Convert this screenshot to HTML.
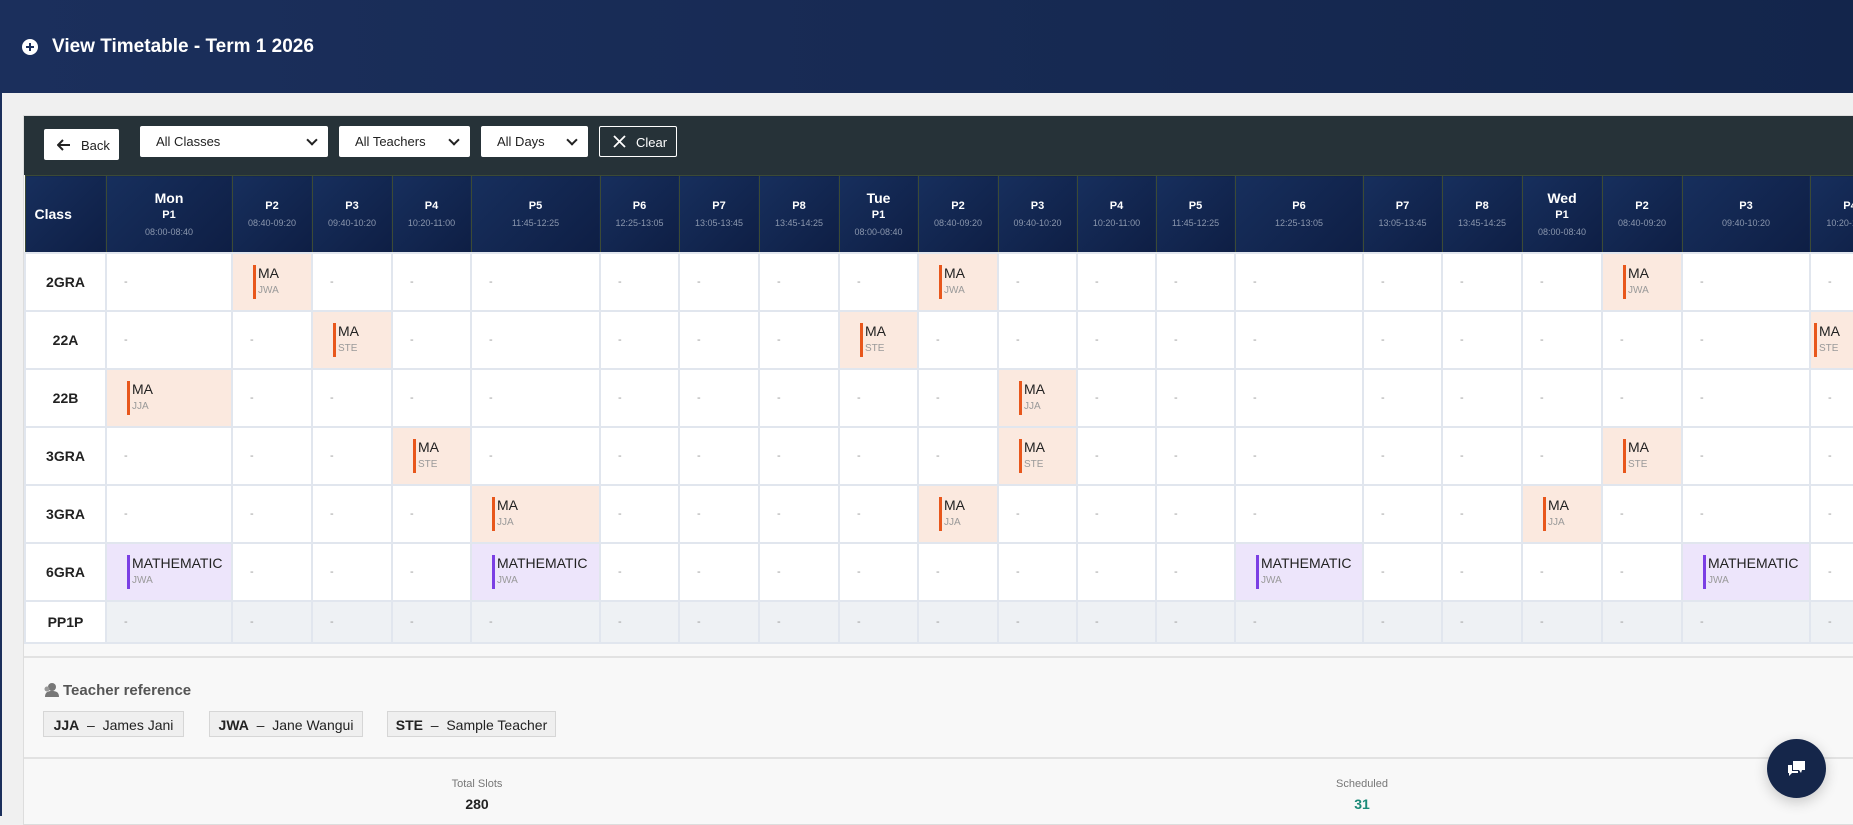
<!DOCTYPE html>
<html><head><meta charset="utf-8">
<style>
*{box-sizing:border-box;margin:0;padding:0}
body{width:1853px;height:816px;overflow:hidden;background:#f0f0f0;font-family:"Liberation Sans",Arial,sans-serif;position:relative}
.top{position:absolute;left:0;top:0;width:1853px;height:93px;background:linear-gradient(90deg,#1b2f5c,#13254b)}
.top h1{position:absolute;left:52px;top:36px;font-size:19px;color:#fff;font-weight:bold}
.top .ic{position:absolute;left:22px;top:39px;width:16px;height:16px;border-radius:50%;background:#fff}
.top .ic:before,.top .ic:after{content:"";position:absolute;background:#1b2f5c}
.top .ic:before{left:4px;top:7px;width:8px;height:2px}
.top .ic:after{left:7px;top:4px;width:2px;height:8px}
.lstrip{position:absolute;left:0;top:93px;width:2px;height:723px;background:#1b2f5c}
.card{position:absolute;left:23px;top:115px;width:1840px;height:710px;background:#f8f8f8;border:1px solid #ddd;overflow:hidden}
.tb{position:absolute;left:0;top:0;width:100%;height:59px;background:#263238}
.btn{position:absolute;background:#fff;border-radius:2px;font-size:13px;color:#222}
.sel{position:absolute;top:10px;height:31px;background:#fff;border-radius:2px;font-size:13px;color:#222;padding:8px 0 0 16px}
.sel:after{content:"";position:absolute;right:12px;top:10px;width:6px;height:6px;border-right:2px solid #222;border-bottom:2px solid #222;transform:rotate(45deg)}
.clr{position:absolute;left:575px;top:10px;width:78px;height:31px;border:1px solid #fff;border-radius:2px;color:#fff;font-size:13px;padding:8px 0 0 36px}
.grid{position:absolute;left:0;top:59px;border-collapse:collapse;table-layout:fixed;width:1865px}
.grid th{background:linear-gradient(135deg,#172f5d,#0e1e44);color:#fff;border:1px solid #3c4a35;height:77px;font-size:11px;text-align:center;font-weight:bold;vertical-align:middle}
.grid th .d{font-size:14px;display:block;margin-bottom:3px}
.grid th .t{display:block;font-size:9px;color:#8a96ad;font-weight:normal;margin-top:6px}
.grid th.cl{text-align:left;padding-left:9px;font-size:14px}
.grid td{height:58px;border:2px solid #e1e6ee;background:#fff;font-size:11px;color:#999;padding-left:17px;vertical-align:middle}
.grid td.cn{background:#fff;color:#222;font-weight:bold;font-size:14px;text-align:center;padding-left:0}
.grid tr.pp td{height:42px;background:#eef1f4}
.grid tr.pp td.cn{background:#fff}
.grid td.o{background:#fbe9df;padding-left:20px}
.grid td.p{background:#ede5fb;padding-left:20px}
.e{border-left:3px solid #e8571c;padding-left:2px;line-height:17px}
.p .e{border-left-color:#7b3fe4}
.e b{display:block;font-weight:normal;color:#222;font-size:14px}
.e i{display:block;font-style:normal;color:#999;font-size:10px}
.ln{position:absolute;left:0;width:100%;height:2px;background:#e2e2e2}
.tr{position:absolute;left:19px;top:566px;font-size:15px;color:#555;font-weight:bold}
.chip{position:absolute;top:595px;height:26px;background:#efefef;border:1px solid #d6d6d6;font-size:14px;color:#222;padding:5px 0 0;white-space:nowrap;text-align:center}
.stl{position:absolute;font-size:11px;color:#777;text-align:center;width:200px}
.stv{position:absolute;font-size:14px;font-weight:bold;text-align:center;width:200px}
.fab{position:absolute;left:1767px;top:739px;width:59px;height:59px;border-radius:50%;background:#15264a;box-shadow:0 4px 14px rgba(0,0,0,.2)}
</style></head><body>
<div class="top"><div class="ic"></div><h1>View Timetable - Term 1 2026</h1></div>
<div class="lstrip"></div>
<div class="card">
<div class="tb">
<div class="btn" style="left:20px;top:13px;width:75px;height:31px;padding:9px 0 0 37px">Back
<svg style="position:absolute;left:13px;top:10px" width="14" height="12" viewBox="0 0 14 12"><path d="M13 6H2M6 1L1 6l5 5" stroke="#222" stroke-width="2" fill="none"/></svg></div>
<div class="sel" style="left:116px;width:188px">All Classes</div>
<div class="sel" style="left:315px;width:131px">All Teachers</div>
<div class="sel" style="left:457px;width:107px">All Days</div>
<div class="clr"><svg style="position:absolute;left:13px;top:8px" width="13" height="13" viewBox="0 0 13 13"><path d="M1 1L12 12M12 1L1 12" stroke="#fff" stroke-width="1.8"/></svg>Clear</div>
</div>
<table class="grid">
<colgroup><col style="width:81px"><col style="width:126px"><col style="width:80px"><col style="width:80px"><col style="width:79px"><col style="width:129px"><col style="width:79px"><col style="width:80px"><col style="width:80px"><col style="width:79px"><col style="width:80px"><col style="width:79px"><col style="width:79px"><col style="width:79px"><col style="width:128px"><col style="width:79px"><col style="width:80px"><col style="width:80px"><col style="width:80px"><col style="width:128px"><col style="width:80px"></colgroup>
<tr><th class="cl">Class</th>
<th><span class="d">Mon</span>P1<span class="t">08:00-08:40</span></th>
<th>P2<span class="t">08:40-09:20</span></th><th>P3<span class="t">09:40-10:20</span></th><th>P4<span class="t">10:20-11:00</span></th><th>P5<span class="t">11:45-12:25</span></th><th>P6<span class="t">12:25-13:05</span></th><th>P7<span class="t">13:05-13:45</span></th><th>P8<span class="t">13:45-14:25</span></th>
<th><span class="d">Tue</span>P1<span class="t">08:00-08:40</span></th>
<th>P2<span class="t">08:40-09:20</span></th><th>P3<span class="t">09:40-10:20</span></th><th>P4<span class="t">10:20-11:00</span></th><th>P5<span class="t">11:45-12:25</span></th><th>P6<span class="t">12:25-13:05</span></th><th>P7<span class="t">13:05-13:45</span></th><th>P8<span class="t">13:45-14:25</span></th>
<th><span class="d">Wed</span>P1<span class="t">08:00-08:40</span></th>
<th>P2<span class="t">08:40-09:20</span></th><th>P3<span class="t">09:40-10:20</span></th><th>P4<span class="t">10:20-11:00</span></th></tr>
<tr><td class="cn">2GRA</td><td>-</td><td class="o"><div class="e"><b>MA</b><i>JWA</i></div></td><td>-</td><td>-</td><td>-</td><td>-</td><td>-</td><td>-</td><td>-</td><td class="o"><div class="e"><b>MA</b><i>JWA</i></div></td><td>-</td><td>-</td><td>-</td><td>-</td><td>-</td><td>-</td><td>-</td><td class="o"><div class="e"><b>MA</b><i>JWA</i></div></td><td>-</td><td>-</td></tr>
<tr><td class="cn">22A</td><td>-</td><td>-</td><td class="o"><div class="e"><b>MA</b><i>STE</i></div></td><td>-</td><td>-</td><td>-</td><td>-</td><td>-</td><td class="o"><div class="e"><b>MA</b><i>STE</i></div></td><td>-</td><td>-</td><td>-</td><td>-</td><td>-</td><td>-</td><td>-</td><td>-</td><td>-</td><td>-</td><td class="o" style="padding-left:3px"><div class="e"><b>MA</b><i>STE</i></div></td></tr>
<tr><td class="cn">22B</td><td class="o"><div class="e"><b>MA</b><i>JJA</i></div></td><td>-</td><td>-</td><td>-</td><td>-</td><td>-</td><td>-</td><td>-</td><td>-</td><td>-</td><td class="o"><div class="e"><b>MA</b><i>JJA</i></div></td><td>-</td><td>-</td><td>-</td><td>-</td><td>-</td><td>-</td><td>-</td><td>-</td><td>-</td></tr>
<tr><td class="cn">3GRA</td><td>-</td><td>-</td><td>-</td><td class="o"><div class="e"><b>MA</b><i>STE</i></div></td><td>-</td><td>-</td><td>-</td><td>-</td><td>-</td><td>-</td><td class="o"><div class="e"><b>MA</b><i>STE</i></div></td><td>-</td><td>-</td><td>-</td><td>-</td><td>-</td><td>-</td><td class="o"><div class="e"><b>MA</b><i>STE</i></div></td><td>-</td><td>-</td></tr>
<tr><td class="cn">3GRA</td><td>-</td><td>-</td><td>-</td><td>-</td><td class="o"><div class="e"><b>MA</b><i>JJA</i></div></td><td>-</td><td>-</td><td>-</td><td>-</td><td class="o"><div class="e"><b>MA</b><i>JJA</i></div></td><td>-</td><td>-</td><td>-</td><td>-</td><td>-</td><td>-</td><td class="o"><div class="e"><b>MA</b><i>JJA</i></div></td><td>-</td><td>-</td><td>-</td></tr>
<tr><td class="cn">6GRA</td><td class="p"><div class="e"><b>MATHEMATIC</b><i>JWA</i></div></td><td>-</td><td>-</td><td>-</td><td class="p"><div class="e"><b>MATHEMATIC</b><i>JWA</i></div></td><td>-</td><td>-</td><td>-</td><td>-</td><td>-</td><td>-</td><td>-</td><td>-</td><td class="p"><div class="e"><b>MATHEMATIC</b><i>JWA</i></div></td><td>-</td><td>-</td><td>-</td><td>-</td><td class="p"><div class="e"><b>MATHEMATIC</b><i>JWA</i></div></td><td>-</td></tr>
<tr class="pp"><td class="cn">PP1P</td><td>-</td><td>-</td><td>-</td><td>-</td><td>-</td><td>-</td><td>-</td><td>-</td><td>-</td><td>-</td><td>-</td><td>-</td><td>-</td><td>-</td><td>-</td><td>-</td><td>-</td><td>-</td><td>-</td><td>-</td></tr>
</table>
<div class="ln" style="top:540px"></div>
<div class="tr"><svg width="16" height="15" viewBox="0 0 16 15" style="vertical-align:-2px;margin-right:4px"><circle cx="9" cy="5" r="4" fill="#777"/><path d="M2 15c0-5 3-6 7-6s7 1 7 6z" fill="#777"/><circle cx="4" cy="7" r="2.5" fill="#999"/></svg>Teacher reference</div>
<div class="chip" style="left:19px;width:141px"><b>JJA</b> &nbsp;–&nbsp; James Jani</div>
<div class="chip" style="left:185px;width:154px"><b>JWA</b> &nbsp;–&nbsp; Jane Wangui</div>
<div class="chip" style="left:363px;width:169px"><b>STE</b> &nbsp;–&nbsp; Sample Teacher</div>
<div class="ln" style="top:641px"></div>
<div class="stl" style="left:353px;top:662px">Total Slots</div>
<div class="stv" style="left:353px;top:680px;color:#222">280</div>
<div class="stl" style="left:1238px;top:662px">Scheduled</div>
<div class="stv" style="left:1238px;top:680px;color:#1b8a78">31</div>
</div>
<div class="fab"><svg style="position:absolute;left:20px;top:21px" width="19" height="17" viewBox="0 0 19 17"><path d="M6 1h12v9h-3l-1 3-2-3H6z" fill="#fff"/><path d="M1 5h4v6h6v2H5l-3 3v-3H1z" fill="#fff"/></svg></div>
</body></html>
